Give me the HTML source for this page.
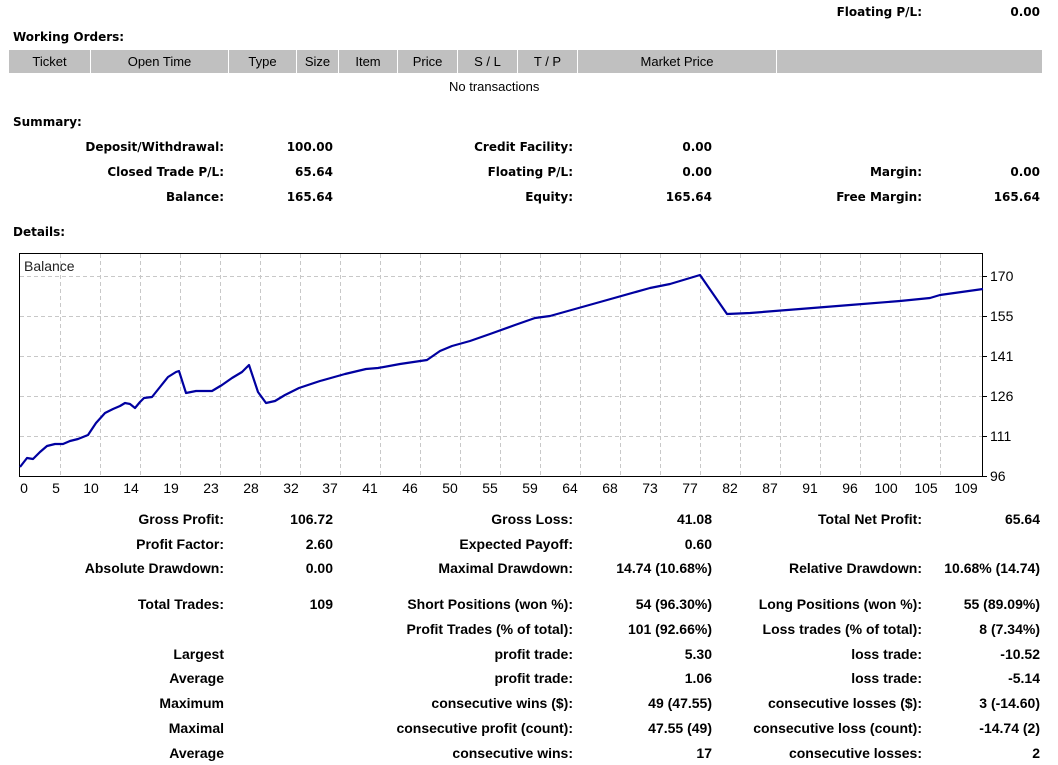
<!DOCTYPE html>
<html><head><meta charset="utf-8"><style>
body{margin:0;width:1058px;height:765px;background:#fff;position:relative;overflow:hidden;font-family:"Liberation Sans",sans-serif;color:#000}
.a{position:absolute;white-space:nowrap;line-height:16px}
.v{font-family:"DejaVu Sans",sans-serif;font-weight:bold;font-size:12px}
.t{font-weight:bold;font-size:14px}
.r{text-align:right}
.h{position:absolute;top:50px;height:23px;background:#c0c0c0;font-size:13px;line-height:23px;text-align:center}
.x{position:absolute;top:480px;font-size:14px;color:#000;transform:translateX(-50%)}
.y{position:absolute;left:990px;font-size:14px}
</style></head><body>
<div class="a v r" style="right:136px;top:4px">Floating P/L:</div>
<div class="a v r" style="right:18px;top:4px">0.00</div>
<div class="a v" style="left:13px;top:29px">Working Orders:</div>
<div class="h" style="left:9px;width:81px">Ticket</div>
<div class="h" style="left:91px;width:137px">Open Time</div>
<div class="h" style="left:229px;width:67px">Type</div>
<div class="h" style="left:297px;width:41px">Size</div>
<div class="h" style="left:339px;width:58px">Item</div>
<div class="h" style="left:398px;width:59px">Price</div>
<div class="h" style="left:458px;width:59px">S / L</div>
<div class="h" style="left:518px;width:59px">T / P</div>
<div class="h" style="left:578px;width:198px">Market Price</div>
<div class="h" style="left:777px;width:265px"></div>
<div class="a" style="left:449px;top:79px;font-size:13px">No transactions</div>
<div class="a v" style="left:13px;top:114px">Summary:</div>

<div class="a v r" style="right:834px;top:139px">Deposit/Withdrawal:</div>
<div class="a v r" style="right:725px;top:139px">100.00</div>
<div class="a v r" style="right:485px;top:139px">Credit Facility:</div>
<div class="a v r" style="right:346px;top:139px">0.00</div>
<div class="a v r" style="right:834px;top:164px">Closed Trade P/L:</div>
<div class="a v r" style="right:725px;top:164px">65.64</div>
<div class="a v r" style="right:485px;top:164px">Floating P/L:</div>
<div class="a v r" style="right:346px;top:164px">0.00</div>
<div class="a v r" style="right:136px;top:164px">Margin:</div>
<div class="a v r" style="right:18px;top:164px">0.00</div>
<div class="a v r" style="right:834px;top:189px">Balance:</div>
<div class="a v r" style="right:725px;top:189px">165.64</div>
<div class="a v r" style="right:485px;top:189px">Equity:</div>
<div class="a v r" style="right:346px;top:189px">165.64</div>
<div class="a v r" style="right:136px;top:189px">Free Margin:</div>
<div class="a v r" style="right:18px;top:189px">165.64</div>
<div class="a v" style="left:13px;top:224px">Details:</div>

<svg style="position:absolute;left:0;top:0" width="1058" height="500">
<g stroke="#c8c8c8" stroke-dasharray="4,3" stroke-width="1">
<path d="M20 276.5H983M20 316.5H983M20 356.5H983M20 396.5H983M20 436.5H983"/>
<path d="M60.5 254V477M100.5 254V477M140.5 254V477M180.5 254V477M220.5 254V477M260.5 254V477M300.5 254V477M340.5 254V477M380.5 254V477M420.5 254V477M460.5 254V477M500.5 254V477M540.5 254V477M580.5 254V477M620.5 254V477M660.5 254V477M700.5 254V477M740.5 254V477M780.5 254V477M820.5 254V477M860.5 254V477M900.5 254V477M940.5 254V477"/>
</g>
<rect x="19.5" y="253.5" width="963" height="223" fill="none" stroke="#000"/>
<g stroke="#000"><path d="M983 276.5h4M983 316.5h4M983 356.5h4M983 396.5h4M983 436.5h4M983 476.5h4"/></g>
<polyline fill="none" stroke="#0000a0" stroke-width="2.2" stroke-linejoin="round" points="20,467 27,458 33,459 40,452 47,446 55,444 63,444 70,441 78,439 88,435 96,423 105,413 113,409 120,406 125,403 130,404 135,408 140,402 144,398 152,397 160,387 168,377 176,372 179,371 186,393 196,391 212,391 222,385 232,378 242,372 249,365 258,392 266,403 275,401 285,395 299,388 320,381 345,374 366,369 378,368 400,364 427,360 440,351 452,346 470,341 490,334 515,325 535,318 550,316 600,302 650,288 670,284 700,275 727,314 750,313 800,309 850,305 900,301 930,298 940,295 983,289"/>
<text x="24" y="271" font-family="Liberation Sans" font-size="14" fill="#222">Balance</text>
</svg>
<div class="y" style="top:268px">170</div><div class="y" style="top:308px">155</div><div class="y" style="top:348px">141</div><div class="y" style="top:388px">126</div><div class="y" style="top:428px">111</div><div class="y" style="top:468px">96</div>
<div class="x" style="left:24px">0</div><div class="x" style="left:56px">5</div><div class="x" style="left:91px">10</div><div class="x" style="left:131px">14</div><div class="x" style="left:171px">19</div><div class="x" style="left:211px">23</div><div class="x" style="left:251px">28</div><div class="x" style="left:291px">32</div><div class="x" style="left:330px">37</div><div class="x" style="left:370px">41</div><div class="x" style="left:410px">46</div><div class="x" style="left:450px">50</div><div class="x" style="left:490px">55</div><div class="x" style="left:530px">59</div><div class="x" style="left:570px">64</div><div class="x" style="left:610px">68</div><div class="x" style="left:650px">73</div><div class="x" style="left:690px">77</div><div class="x" style="left:730px">82</div><div class="x" style="left:770px">87</div><div class="x" style="left:810px">91</div><div class="x" style="left:850px">96</div><div class="x" style="left:886px">100</div><div class="x" style="left:926px">105</div><div class="x" style="left:966px">109</div>

<div class="a t r" style="right:834px;top:511px">Gross Profit:</div><div class="a t r" style="right:725px;top:511px">106.72</div>
<div class="a t r" style="right:485px;top:511px">Gross Loss:</div><div class="a t r" style="right:346px;top:511px">41.08</div>
<div class="a t r" style="right:136px;top:511px">Total Net Profit:</div><div class="a t r" style="right:18px;top:511px">65.64</div>
<div class="a t r" style="right:834px;top:536px">Profit Factor:</div><div class="a t r" style="right:725px;top:536px">2.60</div>
<div class="a t r" style="right:485px;top:536px">Expected Payoff:</div><div class="a t r" style="right:346px;top:536px">0.60</div>
<div class="a t r" style="right:834px;top:560px">Absolute Drawdown:</div><div class="a t r" style="right:725px;top:560px">0.00</div>
<div class="a t r" style="right:485px;top:560px">Maximal Drawdown:</div><div class="a t r" style="right:346px;top:560px">14.74 (10.68%)</div>
<div class="a t r" style="right:136px;top:560px">Relative Drawdown:</div><div class="a t r" style="right:18px;top:560px">10.68% (14.74)</div>

<div class="a t r" style="right:834px;top:596px">Total Trades:</div><div class="a t r" style="right:725px;top:596px">109</div>
<div class="a t r" style="right:485px;top:596px">Short Positions (won %):</div><div class="a t r" style="right:346px;top:596px">54 (96.30%)</div>
<div class="a t r" style="right:136px;top:596px">Long Positions (won %):</div><div class="a t r" style="right:18px;top:596px">55 (89.09%)</div>
<div class="a t r" style="right:485px;top:621px">Profit Trades (% of total):</div><div class="a t r" style="right:346px;top:621px">101 (92.66%)</div>
<div class="a t r" style="right:136px;top:621px">Loss trades (% of total):</div><div class="a t r" style="right:18px;top:621px">8 (7.34%)</div>
<div class="a t r" style="right:834px;top:646px">Largest</div>
<div class="a t r" style="right:485px;top:646px">profit trade:</div><div class="a t r" style="right:346px;top:646px">5.30</div>
<div class="a t r" style="right:136px;top:646px">loss trade:</div><div class="a t r" style="right:18px;top:646px">-10.52</div>
<div class="a t r" style="right:834px;top:670px">Average</div>
<div class="a t r" style="right:485px;top:670px">profit trade:</div><div class="a t r" style="right:346px;top:670px">1.06</div>
<div class="a t r" style="right:136px;top:670px">loss trade:</div><div class="a t r" style="right:18px;top:670px">-5.14</div>
<div class="a t r" style="right:834px;top:695px">Maximum</div>
<div class="a t r" style="right:485px;top:695px">consecutive wins ($):</div><div class="a t r" style="right:346px;top:695px">49 (47.55)</div>
<div class="a t r" style="right:136px;top:695px">consecutive losses ($):</div><div class="a t r" style="right:18px;top:695px">3 (-14.60)</div>
<div class="a t r" style="right:834px;top:720px">Maximal</div>
<div class="a t r" style="right:485px;top:720px">consecutive profit (count):</div><div class="a t r" style="right:346px;top:720px">47.55 (49)</div>
<div class="a t r" style="right:136px;top:720px">consecutive loss (count):</div><div class="a t r" style="right:18px;top:720px">-14.74 (2)</div>
<div class="a t r" style="right:834px;top:745px">Average</div>
<div class="a t r" style="right:485px;top:745px">consecutive wins:</div><div class="a t r" style="right:346px;top:745px">17</div>
<div class="a t r" style="right:136px;top:745px">consecutive losses:</div><div class="a t r" style="right:18px;top:745px">2</div>
</body></html>
